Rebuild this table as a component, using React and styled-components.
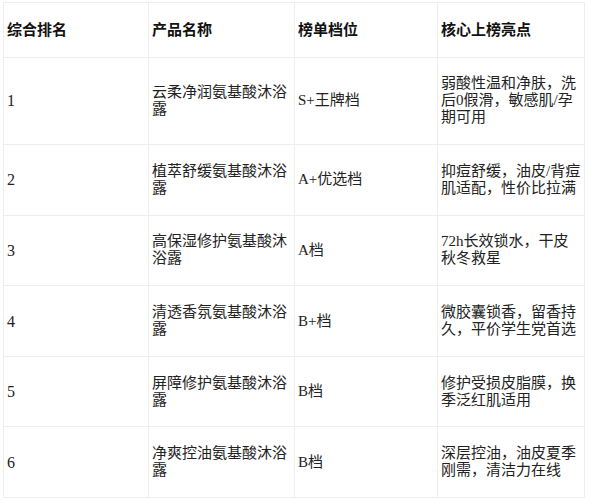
import React from "react";
import styled, { createGlobalStyle } from "styled-components";

const Global = createGlobalStyle`
  html, body { margin: 0; padding: 0; background: #ffffff; }
  body { font-family: "Liberation Serif", "Noto Sans CJK SC", serif; }
`;

const Page = styled.div`
  padding: 2px 5px 0 3px;
`;

const Table = styled.table`
  width: 581px;
  border-collapse: collapse;
  table-layout: fixed;
  font-size: 15px;
  line-height: 17px;
  color: #222222;
`;

const Col = styled.col`
  width: ${(p) => p.$w}px;
`;

const Th = styled.th`
  border: 1px solid #eeeeee;
  padding: 18.5px 3px 18px;
  text-align: left;
  font-weight: 700;
  color: #111111;
  vertical-align: middle;
`;

const Td = styled.td`
  border: 1px solid #eeeeee;
  padding: 17.8px 3px;
  text-align: left;
  vertical-align: middle;
  word-break: break-all;
  font-size: ${(p) => (p.$num ? "16px" : "15px")};
`;

const rows = [
  ["1", "云柔净润氨基酸沐浴露", "S+王牌档", "弱酸性温和净肤，洗后0假滑，敏感肌/孕期可用"],
  ["2", "植萃舒缓氨基酸沐浴露", "A+优选档", "抑痘舒缓，油皮/背痘肌适配，性价比拉满"],
  ["3", "高保湿修护氨基酸沐浴露", "A档", "72h长效锁水，干皮秋冬救星"],
  ["4", "清透香氛氨基酸沐浴露", "B+档", "微胶囊锁香，留香持久，平价学生党首选"],
  ["5", "屏障修护氨基酸沐浴露", "B档", "修护受损皮脂膜，换季泛红肌适用"],
  ["6", "净爽控油氨基酸沐浴露", "B档", "深层控油，油皮夏季刚需，清洁力在线"],
];

export default function App() {
  return (
    <Page>
      <Global />
      <Table>
        <colgroup>
          <Col $w={145} />
          <Col $w={146} />
          <Col $w={143} />
          <Col $w={147} />
        </colgroup>
        <thead>
          <tr>
            <Th>综合排名</Th>
            <Th>产品名称</Th>
            <Th>榜单档位</Th>
            <Th>核心上榜亮点</Th>
          </tr>
        </thead>
        <tbody>
          {rows.map((r) => (
            <tr key={r[0]}>
              {r.map((c, i) => (
                <Td key={i} $num={i === 0}>
                  {c}
                </Td>
              ))}
            </tr>
          ))}
        </tbody>
      </Table>
    </Page>
  );
}
